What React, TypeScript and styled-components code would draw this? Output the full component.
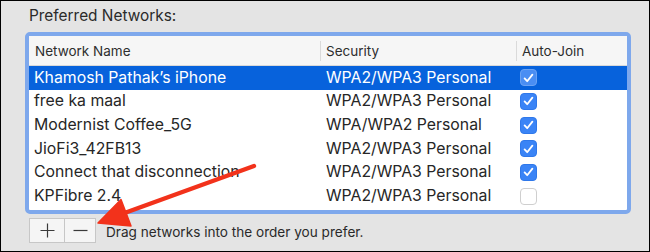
import React from "react";
import styled, { createGlobalStyle } from "styled-components";

const Global = createGlobalStyle`
  html, body { margin: 0; padding: 0; background: #e4e4e4; }
  * { box-sizing: border-box; }
`;

const FONT = `"Inter", "Liberation Sans", Arial, sans-serif`;

const Frame = styled.div`
  position: relative;
  width: 650px;
  height: 252px;
  border: 1px solid #000;
  background: #e4e4e4;
  font-family: ${FONT};
  color: #262626;
  padding: 5px 0 0 24px;
  display: flex;
  flex-direction: column;
  overflow: hidden;
`;

const Title = styled.div`
  font-size: 15.4px;
  line-height: 20px;
  padding-left: 4px;
  color: #2a2a2a;
  height: 26px;
`;

const Panel = styled.div`
  width: 606px;
  height: 182px;
  border: 4px solid #7ea8ec;
  border-radius: 5px;
  background: #fff;
  display: flex;
  flex-direction: column;
`;

const HeaderRow = styled.div`
  display: grid;
  grid-template-columns: 291px 196px 1fr;
  height: 30px;
  background: #f6f6f6;
  border-bottom: 1px solid #d9d9d9;
  align-items: center;
`;

const HeaderCell = styled.div<{ $divider?: boolean }>`
  height: 20px;
  line-height: 20px;
  font-size: 13.5px;
  color: #2e2e2e;
  padding-left: ${(p) => (p.$divider ? "5px" : "6px")};
  border-left: ${(p) => (p.$divider ? "1px solid #dadada" : "none")};
`;

const Body = styled.div`
  display: flex;
  flex-direction: column;
`;

const Row = styled.div<{ $selected?: boolean }>`
  display: grid;
  grid-template-columns: 291px 196px 1fr;
  height: 23.67px;
  align-items: center;
  background: ${(p) => (p.$selected ? "#0762dc" : "#fff")};
  color: ${(p) => (p.$selected ? "#fff" : "#262626")};
`;

const Cell = styled.div<{ $first?: boolean }>`
  font-size: 15.8px;
  line-height: 20px;
  padding-left: ${(p) => (p.$first ? "5px" : "6px")};
  white-space: nowrap;
`;

const CheckCell = styled.div`
  padding-left: 4px;
  display: flex;
  align-items: center;
`;

const Box = styled.div<{ $on: boolean; $selected?: boolean }>`
  width: 17px;
  height: 17px;
  border-radius: 4px;
  display: flex;
  align-items: center;
  justify-content: center;
  background: ${(p) =>
    p.$on ? (p.$selected ? "#4a8ef3" : "#3a84f6") : "#fff"};
  border: ${(p) =>
    p.$on ? (p.$selected ? "1px solid #6aa2f3" : "1px solid #2f78ea") : "1px solid #cfcfcf"};
`;

const Footer = styled.div`
  display: flex;
  align-items: center;
  margin-top: 4px;
  padding-left: 4px;
  height: 25px;
`;

const ButtonGroup = styled.div`
  display: flex;
  border: 1px solid #c7c7c7;
  height: 25px;
  background: #f5f5f5;
`;

const SmallButton = styled.div<{ $last?: boolean }>`
  width: ${(p) => (p.$last ? "31px" : "34px")};
  height: 100%;
  display: flex;
  align-items: center;
  justify-content: center;
  border-left: ${(p) => (p.$last ? "1px solid #c7c7c7" : "none")};
`;

const Hint = styled.div`
  margin-left: 10px;
  font-size: 13.6px;
  color: #2a2a2a;
  padding-top: 2px;
`;

const ArrowLayer = styled.svg`
  position: absolute;
  left: 0;
  top: 0;
  pointer-events: none;
`;

const Check = () => (
  <svg width="11" height="10" viewBox="0 0 11 10">
    <path
      d="M1.6 5.4 L4.2 8.2 L9.4 1.6"
      fill="none"
      stroke="#fff"
      strokeWidth="1.8"
      strokeLinecap="round"
      strokeLinejoin="round"
    />
  </svg>
);

const rows = [
  { name: "Khamosh Pathak’s iPhone", sec: "WPA2/WPA3 Personal", on: true },
  { name: "free ka maal", sec: "WPA2/WPA3 Personal", on: true },
  { name: "Modernist Coffee_5G", sec: "WPA/WPA2 Personal", on: true },
  { name: "JioFi3_42FB13", sec: "WPA2/WPA3 Personal", on: true },
  { name: "Connect that disconnection", sec: "WPA2/WPA3 Personal", on: true },
  { name: "KPFibre 2.4", sec: "WPA2/WPA3 Personal", on: false },
];

export default function App() {
  return (
    <>
      <Global />
      <Frame>
        <Title>Preferred Networks:</Title>
        <Panel>
          <HeaderRow>
            <HeaderCell>Network Name</HeaderCell>
            <HeaderCell $divider>Security</HeaderCell>
            <HeaderCell $divider>Auto-Join</HeaderCell>
          </HeaderRow>
          <Body>
            {rows.map((r, i) => (
              <Row key={r.name} $selected={i === 0}>
                <Cell $first>{r.name}</Cell>
                <Cell>{r.sec}</Cell>
                <CheckCell>
                  <Box $on={r.on} $selected={i === 0}>
                    {r.on && <Check />}
                  </Box>
                </CheckCell>
              </Row>
            ))}
          </Body>
        </Panel>
        <Footer>
          <ButtonGroup>
            <SmallButton>
              <svg width="15" height="15" viewBox="0 0 15 15">
                <path d="M7.5 0.5 V14.5 M0.5 7.5 H14.5" stroke="#3a3a3a" strokeWidth="1.2" />
              </svg>
            </SmallButton>
            <SmallButton $last>
              <svg width="15" height="15" viewBox="0 0 15 15">
                <path d="M0.5 7.5 H14.5" stroke="#3a3a3a" strokeWidth="1.2" />
              </svg>
            </SmallButton>
          </ButtonGroup>
          <Hint>Drag networks into the order you prefer.</Hint>
        </Footer>
        <ArrowLayer width="650" height="252" viewBox="0 0 650 252">
          <path d="M253 165 L118 214" stroke="#f2321b" strokeWidth="4.5" strokeLinecap="round" />
          <path d="M97 222 L120 198.5 L130 225 Z" fill="#f2321b" stroke="#f2321b" strokeWidth="1.5" strokeLinejoin="round" />
        </ArrowLayer>
      </Frame>
    </>
  );
}
